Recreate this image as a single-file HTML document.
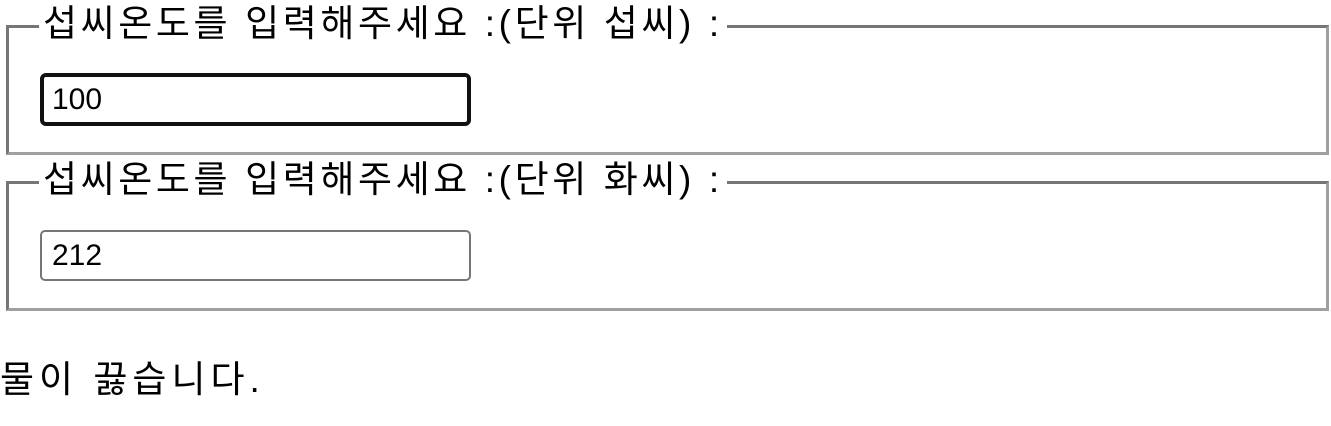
<!DOCTYPE html>
<html><head><meta charset="utf-8"><style>
body{margin:0;width:1331px;height:426px;background:#fff;position:relative;overflow:hidden;font-family:"Liberation Sans","Noto Sans CJK KR",sans-serif;color:#000}
.fs{position:absolute;left:6px;width:1323px;border:3px solid #767676;border-right-color:#a0a0a0;border-bottom-color:#a0a0a0;box-sizing:border-box}
.lg{position:absolute;left:30px;top:-28px;background:#fff;padding:0 4px;font-size:37px;line-height:48px;white-space:nowrap;letter-spacing:3.6px}
.in{position:absolute;left:40px;width:431px;box-sizing:border-box;font-size:30px;padding-left:10px;background:#fff}
</style></head><body>
<div class="fs" style="top:25px;height:130px"><div class="lg">섭씨온도를 입력해주세요 :(단위 섭씨) :</div></div>
<div class="in" style="top:73px;height:53px;border:4px solid #111;border-radius:6px;line-height:45px;padding-left:8px">100</div>
<div class="fs" style="top:181px;height:130px"><div class="lg">섭씨온도를 입력해주세요 :(단위 화씨) :</div></div>
<div class="in" style="top:230px;height:51px;border:2px solid #767676;border-radius:5px;line-height:47px">212</div>
<div style="position:absolute;left:0;top:356px;font-size:37px;line-height:48px;letter-spacing:5px">물이 끓습니다.</div>
</body></html>
